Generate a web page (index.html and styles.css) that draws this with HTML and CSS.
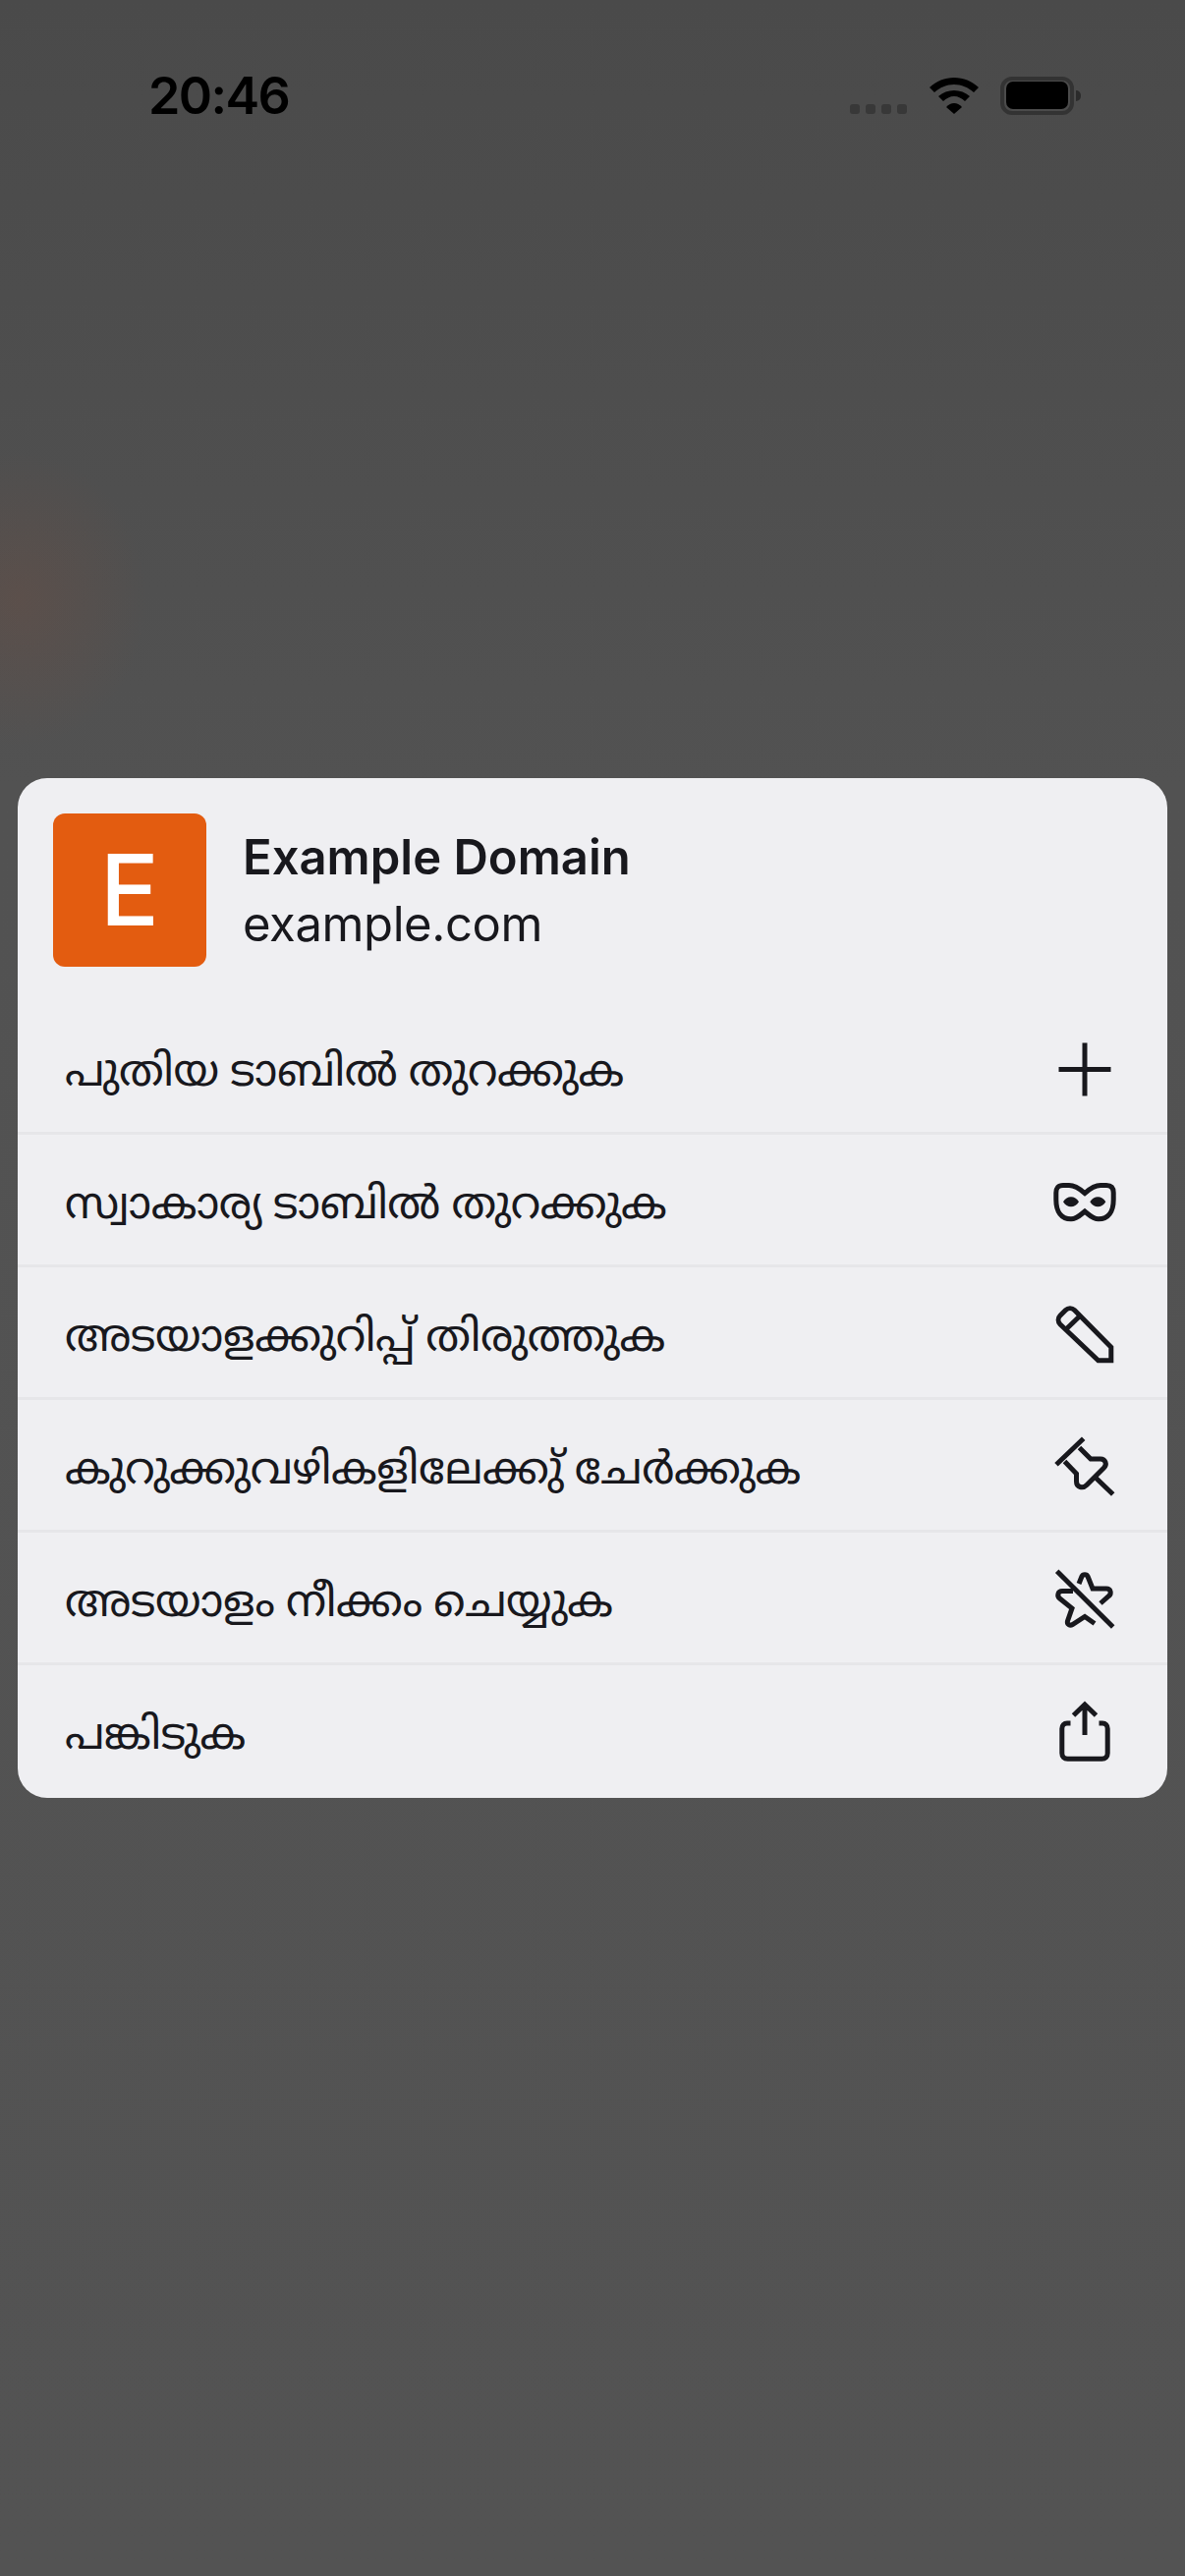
FILE: index.html
```html
<!DOCTYPE html>
<html lang="ml">
<head>
<meta charset="utf-8">
<title>Example Domain</title>
<link rel="stylesheet" href="styles.css">
</head>
<body>
<div class="screen">
  <div class="status">
    <span class="time">20:46</span>
    <div class="status-icons">
      <div class="dots"><i></i><i></i><i></i><i></i></div>
      <svg class="wifi" width="50" height="37" viewBox="0 0 50 37"><path d="M25 0C15.500 0 7 3.500 0 10L5 15C10.500 10 17.500 7 25 7S39.500 10 45 15L50 10C43 3.500 34.500 0 25 0Z"/><path d="M25 13C19 13 13.500 15 9 19L14 24C17 21 21 19 25 19S33 21 36 24L41 19C36.500 15 31 13 25 13Z"/><path d="M25 26C22 26 19.500 27.500 17 30L25 37L33 30C30.500 27.500 28 26 25 26Z"/></svg>
      <div class="battery"><div class="battery-fill"></div></div>
    </div>
  </div>
  <div class="card">
    <div class="head">
      <div class="logo">E</div>
      <div class="titles">
        <div class="title">Example Domain</div>
        <div class="url">example.com</div>
      </div>
    </div>
    <div class="row"><span class="label">പുതിയ ടാബിൽ തുറക്കുക</span><svg class="ico" viewBox="0 0 66 66"><path d="M6.500 35.500H59.500M33 8.500V62.500"/></svg></div>
    <div class="row"><span class="label">സ്വാകാര്യ ടാബിൽ തുറക്കുക</span><svg class="ico" viewBox="0 0 66 66"><path d="M33 26.500C29 23 24 18.500 17 18.500H11C6 18.500 3.800 21 3.800 26V33C3.800 45 9 52.800 19 52.800C25 52.800 28 49 33 45C38 49 41 52.800 47 52.800C57 52.800 62.200 45 62.200 33V26C62.200 21 60 18.500 55 18.500H49C42 18.500 37 23 33 26.500Z"/><path class="solid" d="M11 35.300C13 32 16 30.300 19 30.300C22 30.300 25 32 27 35.300C25 38.600 22 40.300 19 40.300C16 40.300 13 38.600 11 35.300Z"/><path class="solid" d="M38.300 35.300C40.300 32 43.300 30.300 46.300 30.300C49.300 30.300 52.300 32 54.300 35.300C52.300 38.600 49.300 40.300 46.300 40.300C43.300 40.300 40.300 38.600 38.300 35.300Z"/></svg></div>
    <div class="row"><span class="label">അടയാളക്കുറിപ്പ് തിരുത്തുക</span><svg class="ico" viewBox="0 0 66 66"><path d="M46.700 61.800H59.800V48.200L22.500 10.500C20 8 16 8 13.500 10.500L8 16C5.500 18.500 5.500 22.500 8 25Z"/><path d="M28 16.500L14.500 29.500"/></svg></div>
    <div class="row"><span class="label">കുറുക്കുവഴികളിലേക്കു് ചേർക്കുക</span><svg class="ico" viewBox="0 0 66 66"><path d="M4 32.700L31.700 6.300M44 46L61.700 63"/><path d="M27.500 15.500L39 27H49C54 27 56 32.500 52.500 36L35 53.500C31 57.500 24.500 56 24.500 50V42L12.500 29.500"/></svg></div>
    <div class="row"><span class="label">അടയാളം നീക്കം ചെയ്യുക</span><svg class="ico" viewBox="0 0 66 66"><path d="M4.700 6.300L61.700 63"/><path d="M27 19L30 11.500C31 9 35 9 36 11.500L41 24H55C59.500 24 60.500 29 57.500 31.500L49 39"/><path d="M21 26.500H10C5.500 26.500 4.500 31.500 7.500 34L20 44L15.500 57C14.500 60.500 18 62 20.500 60.500L33 52.500L43 59.500"/></svg></div>
    <div class="row last"><span class="label">പങ്കിടുക</span><svg class="ico" viewBox="0 0 66 66"><path d="M18.500 26H15C12 26 9.800 28 9.800 31.500V56.500C9.800 60 12 62.200 15.500 62.200H50.500C54 62.200 56.200 60 56.200 56.500V31.500C56.200 28 54 26 51 26H47.500"/><path d="M33 38V7M21.500 18L33 7L44.500 18"/></svg></div>
  </div>
</div>
</body>
</html>
```
FILE: styles.css
```css
* { box-sizing: border-box; }
html, body { margin: 0; padding: 0; }
body { width: 1206px; height: 2622px; overflow: hidden; }
.screen {
  width: 1206px;
  height: 2622px;
  overflow: hidden;
  background:
    radial-gradient(ellipse 130px 150px at 20px 610px, rgba(115, 78, 64, 0.32), rgba(85, 85, 85, 0) 100%),
    linear-gradient(180deg, #4a4a4a 0, #525252 800px, #535353 2622px);
}
.status {
  height: 792px;
  padding: 72px 113px 0 151px;
  display: flex;
  justify-content: space-between;
  align-items: flex-start;
}
.time {
  font-family: Inter, sans-serif;
  font-weight: 600;
  font-size: 52px;
  line-height: 52px;
  letter-spacing: -1.6px;
  color: #000;
}
.status-icons { display: flex; align-items: flex-start; margin-top: 6px; }
.dots { display: flex; gap: 6px; margin: 28px 23px 0 0; }
.dots i { display: block; width: 10px; height: 10px; border-radius: 3px; background: #383838; }
.wifi { fill: #000; margin: 1px 22px 0 0; }
.battery {
  width: 75px;
  height: 39px;
  padding: 1px 2px 2px;
  border: 4px solid #333;
  border-radius: 12px;
  position: relative;
}
.battery::after {
  content: "";
  position: absolute;
  right: -11px;
  top: 10px;
  width: 5px;
  height: 11px;
  border-radius: 0 5px 5px 0;
  background: #2b2b2b;
}
.battery-fill { width: 100%; height: 100%; border-radius: 7px; background: #000; }
.card {
  margin: 0 18px;
  height: 1038px;
  background: #efeff2;
  border-radius: 30px;
  overflow: hidden;
  color: #18181d;
}
.head { height: 228px; padding: 36px 0 0 36px; display: flex; gap: 37px; }
.logo {
  width: 156px;
  height: 156px;
  border-radius: 12px;
  background: #e35c10;
  color: #fff;
  font-family: Inter, sans-serif;
  font-weight: 500;
  font-size: 100px;
  line-height: 156px;
  text-align: center;
}
.titles { padding-top: 11px; font-family: Inter, sans-serif; font-size: 49px; line-height: 68px; }
.title { font-weight: 600; }
.url { font-weight: 400; letter-spacing: -0.4px; }
.row {
  height: 135px;
  padding: 0 51px 0 48px;
  border-bottom: 3px solid #e6e6e9;
  display: flex;
  align-items: center;
  justify-content: space-between;
}
.row.last { border-bottom: 0; padding-bottom: 3px; }
.label {
  font-family: "Noto Sans", "Noto Sans Malayalam", "Noto Sans CJK SC", sans-serif;
  font-size: 45px;
  letter-spacing: -0.3px;
  padding-top: 6px;
  color: #18181d;
}
.ico { width: 66px; height: 66px; fill: none; stroke: #18181d; stroke-width: 5; flex: none; }
.ico .solid { fill: #18181d; stroke: none; }
```
